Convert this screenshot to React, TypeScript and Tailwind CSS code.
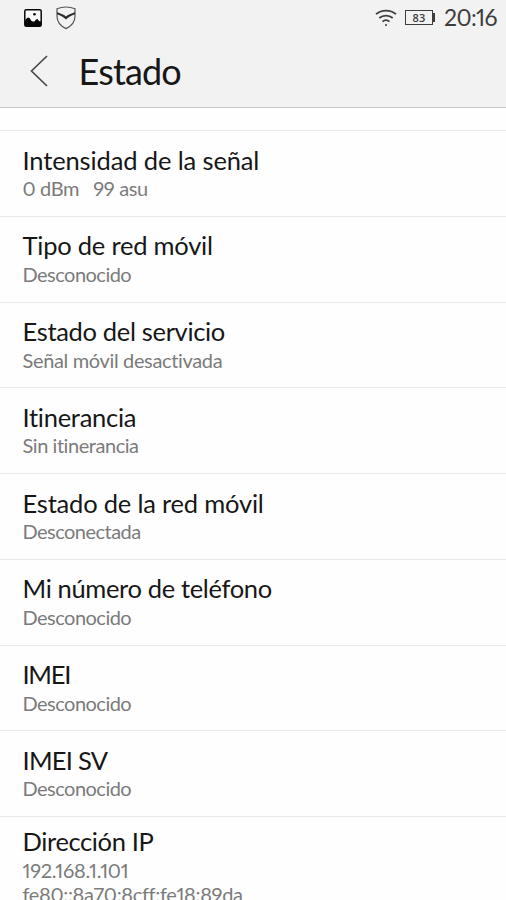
import type React from "react"
import clsx from "clsx"

type Line = { text: string; tracking: string }
type Item = { title: Line; values: Line[] }

const unknown: Line = { text: "Desconocido", tracking: "tracking-[-0.52px]" }

const items: Item[] = [
  {
    title: { text: "Intensidad de la señal", tracking: "tracking-[-0.13px]" },
    values: [{ text: "0 dBm   99 asu", tracking: "tracking-[-0.38px]" }],
  },
  { title: { text: "Tipo de red móvil", tracking: "tracking-[-0.22px]" }, values: [unknown] },
  {
    title: { text: "Estado del servicio", tracking: "tracking-[-0.33px]" },
    values: [{ text: "Señal móvil desactivada", tracking: "tracking-[-0.35px]" }],
  },
  {
    title: { text: "Itinerancia", tracking: "tracking-[-0.27px]" },
    values: [{ text: "Sin itinerancia", tracking: "tracking-[-0.45px]" }],
  },
  {
    title: { text: "Estado de la red móvil", tracking: "tracking-[-0.2px]" },
    values: [{ text: "Desconectada", tracking: "tracking-[-0.53px]" }],
  },
  { title: { text: "Mi número de teléfono", tracking: "tracking-[-0.35px]" }, values: [unknown] },
  { title: { text: "IMEI", tracking: "tracking-[-1.3px]" }, values: [unknown] },
  { title: { text: "IMEI SV", tracking: "tracking-[-0.75px]" }, values: [unknown] },
  {
    title: { text: "Dirección IP", tracking: "tracking-[-0.38px]" },
    values: [
      { text: "192.168.1.101", tracking: "tracking-[-0.28px]" },
      { text: "fe80::8a70:8cff:fe18:89da", tracking: "tracking-[-0.34px]" },
    ],
  },
]

function PictureIcon() {
  return (
    <svg className="w-[18px] h-[18px]" viewBox="0 0 18 18">
      <rect x="0.8" y="0.8" width="16.4" height="16.4" rx="1.5" fill="#fafafa" stroke="#080808" strokeWidth="1.5" />
      <path
        d="M1 11.500 L2.500 9.500 L4 8.500 L5.500 9 L7.500 12 L9 12.500 L10.500 12.500 L12 10.500 L13.500 10 L15 12 L17 12.500 V17 H1 Z"
        fill="#080808"
      />
      <circle cx="10.5" cy="5.2" r="1.3" fill="#080808" />
    </svg>
  )
}

function ShieldIcon() {
  return (
    <svg className="w-[20px] h-[24px]" viewBox="0 0 20 24" fill="none">
      <path
        d="M10 1 C13 1 16.500 1.700 19 2.700 V10 C19 15.500 15.500 20 10 22.600 C4.500 20 1 15.500 1 10 V2.700 C3.500 1.700 7 1 10 1 Z"
        stroke="#555"
        strokeWidth="1.2"
      />
      <path d="M1 6 L3 7 C6 7.800 8 8.800 10 10.500 C12 8.800 14 7.800 17 7 L19 6 V8.300 C15.500 9.500 12 11.500 10 13.500 C8 11.500 4.500 9.500 1 8.300 Z" fill="#2b2b2b" />
    </svg>
  )
}

function WifiIcon() {
  return (
    <svg className="w-[22px] h-[18px]" viewBox="0 0 22 18" fill="none" stroke="#3d3d3d" strokeWidth="1.8">
      <path d="M1 5.200 C6.500 0.300 15.500 0.300 21 5.200" />
      <path d="M4.300 9 C8 5.700 14 5.700 17.700 9" />
      <path d="M7.500 12.600 C9.500 10.900 12.500 10.900 14.500 12.600" />
      <circle cx="11" cy="16" r="1" fill="#3d3d3d" stroke="none" />
    </svg>
  )
}

function Battery() {
  return (
    <div className="flex items-center">
      <div className="w-[28px] h-[15px] border border-[#3d3d3d] flex items-center justify-center">
        <span className="font-['Open_Sans'] text-[11px] leading-none font-semibold tracking-[0.3px] text-[#3d3d3d]">83</span>
      </div>
      <div className="w-[2px] h-[9px] bg-[#3d3d3d]" />
    </div>
  )
}

function Row({ item, children }: { item: Item; children?: React.ReactNode }) {
  const tall = item.values.length > 1
  return (
    <li
      className={clsx(
        "border-t border-[#e9e9e9] pl-[22.5px] shrink-0 whitespace-pre",
        tall ? "h-[110px] pt-[8px]" : "h-[85.75px] pt-[12.7px]",
      )}
    >
      <h2 className={clsx("text-[25.5px] leading-[32.5px] text-[#171717]", item.title.tracking)}>{item.title.text}</h2>
      {item.values.map((v) => (
        <p
          key={v.text}
          className={clsx(
            "text-[20px] text-[#7b7b7b] proportional-nums",
            tall ? "leading-[24.5px]" : "leading-[25.5px]",
            v.tracking,
          )}
        >
          {v.text}
        </p>
      ))}
      {children}
    </li>
  )
}

export default function App() {
  return (
    <div className="w-full h-[900px] overflow-hidden bg-[#fefefe] font-['Lato',sans-serif] [font-variant-ligatures:none] flex flex-col">
      <header className="h-[108px] shrink-0 bg-[#f2f2f2] border-b border-[#c9c9c9]">
        {/* Status bar */}
        <div className="h-[35px] flex items-center justify-between pl-[24px] pr-[9px]">
          <div className="flex items-center gap-[14px]">
            <PictureIcon />
            <ShieldIcon />
          </div>
          <div className="flex items-center">
            <WifiIcon />
            <div className="ml-[8px] mr-[9px]">
              <Battery />
            </div>
            <span className="text-[23px] leading-[35px] tracking-[-0.6px] text-[#3d3d3d] proportional-nums">20:16</span>
          </div>
        </div>
        {/* Title bar */}
        <div className="h-[72px] flex items-center pl-[30px]">
          <svg className="w-[18px] h-[32px]" viewBox="0 0 18 32" fill="none" stroke="#4a4a4a" strokeWidth="1.7">
            <path d="M17 1 L1.500 16 L17 31" />
          </svg>
          <h1 className="ml-[30.5px] text-[36px] leading-[44px] tracking-[-0.85px] text-[#171717]">Estado</h1>
        </div>
      </header>

      <ul className="pt-[22px] flex flex-col">
        {items.map((item) => (
          <Row key={item.title.text} item={item} />
        ))}
      </ul>
    </div>
  )
}
